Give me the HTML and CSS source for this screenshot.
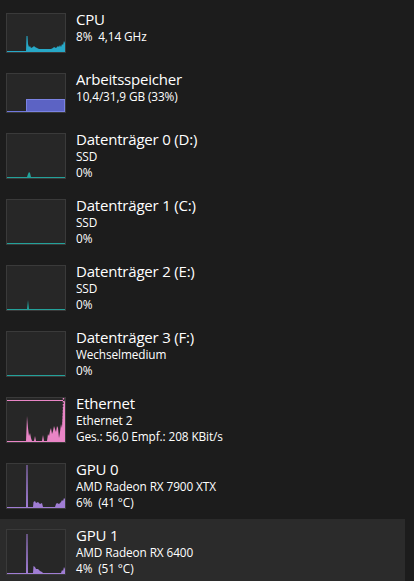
FILE: index.html
```html
<!DOCTYPE html>
<html lang="de">
<head>
<meta charset="utf-8">
<link rel="stylesheet" href="styles.css">
</head>
<body>
<div class="list">
  <div class="row">
    <div class="thumb short">
      <svg viewBox="0 0 58 38" width="58" height="38">
        <path class="cpu" d="M0,38 L0,37 L19,37 L19.5,22 L20.5,22 L21,30 L22,33 L23,32 L24,34 L26,33 L27,32 L28,33 L30,34 L32,35 L36,35 L40,35 L44,35 L46,34 L47,33 L49,34 L50,33 L51,32 L52,33 L53,31 L54,33 L55,30 L56,31 L57,27 L58,29 L58,38 Z"/>
      </svg>
    </div>
    <div class="info">
      <div class="title">CPU</div>
      <div class="sub">8%&nbsp; 4,14 GHz</div>
    </div>
  </div>

  <div class="row">
    <div class="thumb short">
      <svg viewBox="0 0 58 38" width="58" height="38">
        <path class="memline" d="M0,37.5 L19,37.5"/>
        <rect class="mem" x="19.5" y="25.5" width="38" height="12"/>
      </svg>
    </div>
    <div class="info">
      <div class="title">Arbeitsspeicher</div>
      <div class="sub">10,4/31,9 GB (33%)</div>
    </div>
  </div>

  <div class="row">
    <div class="thumb tall">
      <svg viewBox="0 0 58 44" width="58" height="44">
        <path class="disk" d="M0,44 L0,43 L20,43 L21,40 L22,38 L23,39 L24,43 L58,43 L58,44 Z"/>
      </svg>
    </div>
    <div class="info">
      <div class="title">Datenträger 0 (D:)</div>
      <div class="sub">SSD</div>
      <div class="sub">0%</div>
    </div>
  </div>

  <div class="row">
    <div class="thumb tall">
      <svg viewBox="0 0 58 44" width="58" height="44">
        <path class="disk" d="M0,44 L0,43 L58,43 L58,44 Z"/>
      </svg>
    </div>
    <div class="info">
      <div class="title">Datenträger 1 (C:)</div>
      <div class="sub">SSD</div>
      <div class="sub">0%</div>
    </div>
  </div>

  <div class="row">
    <div class="thumb tall">
      <svg viewBox="0 0 58 44" width="58" height="44">
        <path class="disk" d="M0,44 L0,43 L20,43 L21,34 L22,43 L58,43 L58,44 Z"/>
      </svg>
    </div>
    <div class="info">
      <div class="title">Datenträger 2 (E:)</div>
      <div class="sub">SSD</div>
      <div class="sub">0%</div>
    </div>
  </div>

  <div class="row">
    <div class="thumb tall">
      <svg viewBox="0 0 58 44" width="58" height="44">
        <path class="disk" d="M0,44 L0,43 L58,43 L58,44 Z"/>
      </svg>
    </div>
    <div class="info">
      <div class="title">Datenträger 3 (F:)</div>
      <div class="sub">Wechselmedium</div>
      <div class="sub">0%</div>
    </div>
  </div>

  <div class="row">
    <div class="thumb tall">
      <svg viewBox="0 0 58 44" width="58" height="44">
        <path class="ethline" d="M0,2.5 L56,2.5"/>
        <path class="ethdot" d="M56.5,0 L56.5,44"/>
        <path class="eth" d="M0,44 L0,43 L19,43 L20,18 L21,30 L22,38 L23,35 L24,40 L25,43 L27,43 L28,38 L29,43 L35,43 L36,37 L37,43 L40,43 L41,36 L42,38 L43,33 L44,30 L45,36 L46,33 L47,28 L48,31 L49,34 L50,28 L51,30 L52,40 L53,34 L54,26 L55,30 L56,10 L57,4 L58,2 L58,44 Z"/>
      </svg>
    </div>
    <div class="info">
      <div class="title">Ethernet</div>
      <div class="sub">Ethernet 2</div>
      <div class="sub">Ges.: 56,0 Empf.: 208 KBit/s</div>
    </div>
  </div>

  <div class="row">
    <div class="thumb tall">
      <svg viewBox="0 0 58 44" width="58" height="44">
        <path class="gpu" d="M0,44 L0,43 L19,43 L19.5,1 L20.5,1 L21,43 L26,43 L26.5,38 L28,37 L29,39 L31,38 L33,40 L35,39 L36,43 L48,43 L49,40 L50,39 L52,40 L54,38 L55,36 L56,37 L57,34 L58,35 L58,44 Z"/>
      </svg>
    </div>
    <div class="info">
      <div class="title">GPU 0</div>
      <div class="sub">AMD Radeon RX 7900 XTX</div>
      <div class="sub">6%&nbsp; (41 °C)</div>
    </div>
  </div>

  <div class="row active">
    <div class="thumb tall">
      <svg viewBox="0 0 58 44" width="58" height="44">
        <path class="gpu" d="M0,44 L0,43 L19,43 L19.5,4 L20.5,4 L21,43 L26,43 L26.5,36 L28,37 L29,39 L31,39 L33,41 L35,42 L36,43 L54,43 L55,40 L56,41 L57,37 L58,39 L58,44 Z"/>
      </svg>
    </div>
    <div class="info">
      <div class="title">GPU 1</div>
      <div class="sub">AMD Radeon RX 6400</div>
      <div class="sub">4%&nbsp; (51 °C)</div>
    </div>
  </div>
</div>
</body>
</html>
```

FILE: styles.css
```css
html, body {
  margin: 0;
  padding: 0;
  background: #1c1c1c;
  height: 100%;
  overflow: hidden;
}

body {
  font-family: "Open Sans", "Noto Sans", sans-serif;
  color: #ffffff;
}

.list {
  display: flex;
  flex-direction: column;
  padding-top: 3px;
  width: 405px;
}

.row {
  display: flex;
  align-items: flex-start;
  gap: 10px;
  padding: 10px 0 10px 6px;
}

.row.active {
  background: #2b2b2b;
}

.thumb {
  flex: none;
  width: 58px;
  border: 1px solid #3a3a3a;
  background: #272727;
  display: flex;
}

.thumb.short { height: 38px; }
.thumb.tall { height: 44px; }

.thumb svg { display: block; }

.cpu { fill: #27a8c7; }
.memline { stroke: #7078de; stroke-width: 1; fill: none; }
.mem { fill: #5c63c4; stroke: #7a82e2; stroke-width: 1; }
.disk { fill: #23a19a; }
.ethline { stroke: #e985c6; stroke-width: 1; fill: none; }
.ethdot { stroke: #e985c6; stroke-width: 1.5; stroke-dasharray: 1.5 1.5; fill: none; }
.eth { fill: #e985c6; }
.gpu { fill: #a07dd4; }

.info {
  display: flex;
  flex-direction: column;
  margin-top: -4px;
  margin-bottom: -2px;
}

.title {
  font-size: 15px;
  line-height: 20px;
  letter-spacing: -0.2px;
}

.sub {
  font-size: 11.8px;
  line-height: 15.5px;
  letter-spacing: -0.1px;
}
```
